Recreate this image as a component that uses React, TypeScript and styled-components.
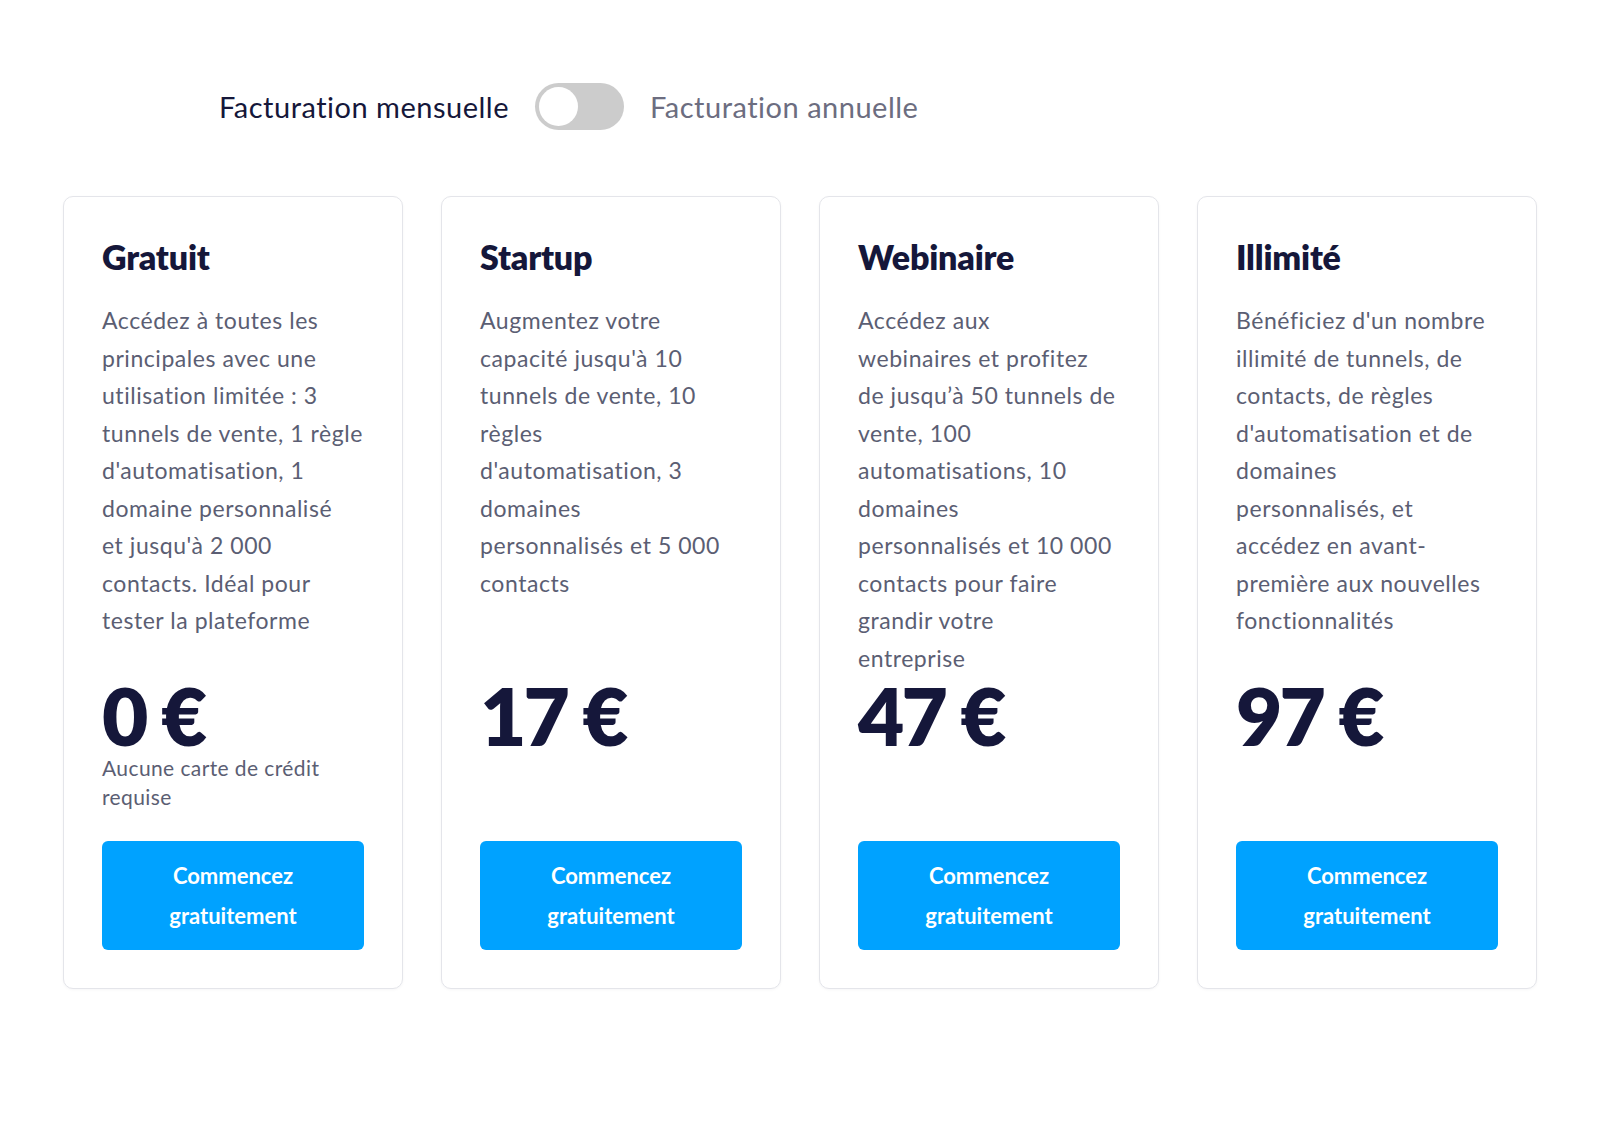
import styled, { createGlobalStyle } from 'styled-components'

const GlobalStyle = createGlobalStyle`
  * {
    box-sizing: border-box;
  }
  body {
    margin: 0;
    background: #ffffff;
    font-family: Lato, 'Noto Sans', sans-serif;
  }
`

interface Plan {
  name: string
  lines: string[]
  price: string
  note?: string[]
}

const plans: Plan[] = [
  {
    name: 'Gratuit',
    lines: [
      'Accédez à toutes les',
      'principales avec une',
      'utilisation limitée : 3',
      'tunnels de vente, 1 règle',
      "d'automatisation, 1",
      'domaine personnalisé',
      "et jusqu'à 2 000",
      'contacts. Idéal pour',
      'tester la plateforme'
    ],
    price: '0 €',
    note: ['Aucune carte de crédit', 'requise']
  },
  {
    name: 'Startup',
    lines: [
      'Augmentez votre',
      "capacité jusqu'à 10",
      'tunnels de vente, 10',
      'règles',
      "d'automatisation, 3",
      'domaines',
      'personnalisés et 5 000',
      'contacts'
    ],
    price: '17 €'
  },
  {
    name: 'Webinaire',
    lines: [
      'Accédez aux',
      'webinaires et profitez',
      'de jusqu’à 50 tunnels de',
      'vente, 100',
      'automatisations, 10',
      'domaines',
      'personnalisés et 10 000',
      'contacts pour faire',
      'grandir votre',
      'entreprise'
    ],
    price: '47 €'
  },
  {
    name: 'Illimité',
    lines: [
      "Bénéficiez d'un nombre",
      'illimité de tunnels, de',
      'contacts, de règles',
      "d'automatisation et de",
      'domaines',
      'personnalisés, et',
      'accédez en avant-',
      'première aux nouvelles',
      'fonctionnalités'
    ],
    price: '97 €'
  }
]

function App() {
  return (
    <>
      <GlobalStyle />
      <Page>
        <BillingRow>
          <BillingLabel $active>Facturation mensuelle</BillingLabel>
          <Switch type="button" aria-label="Changer la facturation">
            <Knob />
          </Switch>
          <BillingLabel>Facturation annuelle</BillingLabel>
        </BillingRow>
        <PlanGrid>
          {plans.map(plan => (
            <PlanCard key={plan.name}>
              <PlanName>{plan.name}</PlanName>
              <PlanText>
                {plan.lines.map((line, i) => (
                  <TextLine key={i}>{line}</TextLine>
                ))}
              </PlanText>
              <Price>{plan.price}</Price>
              {plan.note && (
                <PriceNote>
                  {plan.note.map((line, i) => (
                    <TextLine key={i}>{line}</TextLine>
                  ))}
                </PriceNote>
              )}
              <CardFooter>
                <StartButton type="button">
                  Commencez
                  <br />
                  gratuitement
                </StartButton>
              </CardFooter>
            </PlanCard>
          ))}
        </PlanGrid>
      </Page>
    </>
  )
}

export default App

const Page = styled.main`
  padding: 83px 63px 60px;
  display: flex;
  flex-direction: column;
  gap: 66px;
`

const BillingRow = styled.div`
  display: flex;
  align-items: center;
  gap: 26px;
  padding-left: 156px;
`

const BillingLabel = styled.span<{ $active?: boolean }>`
  font-size: 29px;
  font-weight: 400;
  letter-spacing: 0.5px;
  color: ${({ $active }) => ($active ? '#15173a' : '#6c6d80')};
`

const Switch = styled.button`
  position: relative;
  width: 89px;
  height: 47px;
  border: none;
  border-radius: 24px;
  background: #cccccc;
  padding: 0;
  cursor: pointer;
`

const Knob = styled.span`
  position: absolute;
  top: 4px;
  left: 4px;
  width: 39px;
  height: 39px;
  border-radius: 50%;
  background: #ffffff;
`

const PlanGrid = styled.div`
  display: grid;
  grid-template-columns: repeat(4, 340px);
  gap: 38px;
`

const PlanCard = styled.section`
  display: flex;
  flex-direction: column;
  padding: 38px;
  border: 1px solid #e4e5ea;
  border-radius: 10px;
  background: #ffffff;
  box-shadow: 0 1px 3px rgba(20, 23, 58, 0.04);
`

const PlanName = styled.h3`
  margin: 0 0 23px;
  font-size: 34px;
  line-height: 44px;
  font-weight: 800;
  color: #15173a;
  letter-spacing: -0.2px;
`

const PlanText = styled.p`
  margin: 0;
  min-height: 375px;
  font-size: 23px;
  line-height: 37.5px;
  letter-spacing: 0.55px;
  color: #5b5e73;
`

const TextLine = styled.span`
  display: block;
  white-space: nowrap;
`

const Price = styled.div`
  font-size: 80px;
  line-height: 76px;
  font-weight: 800;
  color: #15173a;
  letter-spacing: -3px;
`

const PriceNote = styled.p`
  margin: 0;
  font-size: 21px;
  line-height: 29px;
  letter-spacing: 0.4px;
  color: #5b5e73;
`

const CardFooter = styled.div`
  margin-top: auto;
  padding-top: 30px;
`

const StartButton = styled.button`
  display: block;
  width: 100%;
  height: 109px;
  border: none;
  border-radius: 6px;
  background: #00a2ff;
  color: #ffffff;
  font-family: Lato, 'Noto Sans', sans-serif;
  font-size: 22px;
  font-weight: 700;
  line-height: 40px;
  cursor: pointer;
`
